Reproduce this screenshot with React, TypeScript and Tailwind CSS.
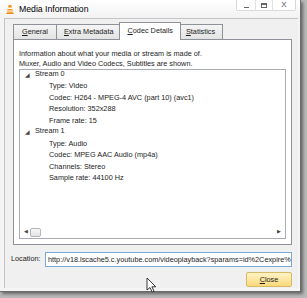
import React from "react";

const tree = [
  {
    name: "Stream 0",
    items: [
      "Type: Video",
      "Codec: H264 - MPEG-4 AVC (part 10) (avc1)",
      "Resolution: 352x288",
      "Frame rate: 15",
    ],
  },
  {
    name: "Stream 1",
    items: [
      "Type: Audio",
      "Codec: MPEG AAC Audio (mp4a)",
      "Channels: Stereo",
      "Sample rate: 44100 Hz",
    ],
  },
];

const tabs = [
  { first: "G", rest: "eneral" },
  { first: "E", rest: "xtra Metadata" },
  { first: "C", rest: "odec Details", active: true },
  { first: "S", rest: "tatistics" },
];

function VlcIcon() {
  return (
    <svg width="10" height="11" viewBox="0 0 10 11">
      <path d="M1 10 L9 10 L8 8.5 L2 8.5 Z" fill="#f08a12" />
      <path d="M3.6 1 L6.4 1 L8 8.5 L2 8.5 Z" fill="#f7941d" />
      <path d="M3.1 3.5 L6.9 3.5 L7.2 5 L2.8 5 Z" fill="#ffffff" />
      <path d="M2.5 6.4 L7.5 6.4 L7.7 7.4 L2.3 7.4 Z" fill="#ffffff" />
    </svg>
  );
}

function Cursor() {
  return (
    <svg width="12" height="16" viewBox="0 0 12 16" className="absolute left-[146px] top-[277px]">
      <path
        d="M1 1 L1 13 L4 10.5 L6.2 15 L8 14.2 L5.9 9.8 L9.8 9.8 Z"
        fill="#ffffff"
        stroke="#222"
        strokeWidth="0.9"
        strokeLinejoin="round"
      />
    </svg>
  );
}

export default function App() {
  return (
    <div className="relative w-[307px] h-[298px] overflow-hidden bg-[#b9b9b9] font-['Liberation_Sans',Arial,sans-serif] text-[#1c1c1c]">
      {/* window */}
      <div className="flex flex-col w-[301px] h-[292px] bg-[#f4f4f4] border-r border-b border-[#6b6b6b] shadow-[2px_2px_3px_rgba(0,0,0,0.45)]">
        {/* title bar */}
        <div className="flex items-center h-[18px] pl-[5px] pr-[4px] bg-gradient-to-b from-[#ffffff] to-[#f2f2f2]">
          <VlcIcon />
          <span className="ml-[4px] text-[8.7px] leading-none text-black">Media Information</span>
          <div className="ml-auto flex items-start self-start h-[11px] border border-t-0 border-[#d8d8d8] rounded-b-[2px] bg-white text-[#555]">
            <div className="flex items-end justify-center w-[19px] h-[10px] pb-[2px] border-r border-[#e2e2e2]">
              <div className="w-[5px] h-[1.5px] bg-[#666]" />
            </div>
            <div className="flex items-center justify-center w-[17px] h-[10px] border-r border-[#e2e2e2]">
              <div className="w-[6px] h-[5px] border border-[#666] border-t-2" />
            </div>
            <div className="flex items-center justify-center w-[22px] h-[10px] text-[8px] leading-none text-[#555]">X</div>
          </div>
        </div>

        {/* client area */}
        <div className="flex flex-col flex-1 ml-[4px] mr-[2px] mb-[3px] border-l border-t border-[#c4c4c4] bg-[#f0f0f0] pl-[8px] pr-[6px] text-[7.3px]">
          {/* tabs */}
          <div className="flex items-end h-[20px]">
            {tabs.map((t) =>
              t.active ? (
                <div
                  key={t.rest}
                  className="relative z-10 -mb-px mx-[-2px] h-[18px] px-[7px] pt-[4px] bg-white border border-b-0 border-[#8e9198] leading-none"
                >
                  <span className="underline">{t.first}</span>
                  {t.rest}
                </div>
              ) : (
                <div
                  key={t.rest}
                  className="h-[15px] px-[7px] first:px-[8px] pt-[3px] bg-gradient-to-b from-[#f5f5f5] to-[#e3e3e3] border border-b-0 border-[#8e9198] leading-none -ml-px first:ml-0"
                >
                  <span className="underline">{t.first}</span>
                  {t.rest}
                </div>
              )
            )}
          </div>
          {/* pane */}
          <div className="flex flex-col h-[206px] bg-white border border-[#8e9198] px-[5px] pt-[9px] pb-[5px]">
            <div className="leading-[10px]">
              Information about what your media or stream is made of.
              <br />
              Muxer, Audio and Video Codecs, Subtitles are shown.
            </div>
            <div className="relative flex flex-col flex-1 mt-[0px] border border-[#a9acb2]">
              <div className="flex-1 -mt-[1px] pl-[5px]">
                {tree.map((s) => (
                  <div key={s.name}>
                    <div className="flex items-center h-[11.45px]">
                      <span className="w-[10px] text-[5.5px] text-[#444]">◢</span>
                      <span>{s.name}</span>
                    </div>
                    {s.items.map((it) => (
                      <div key={it} className="h-[11.45px] leading-[11.45px] pl-[24px] whitespace-nowrap">
                        {it}
                      </div>
                    ))}
                  </div>
                ))}
              </div>
              {/* horizontal scrollbar */}
              <div className="flex items-center h-[10px] mb-[1px] px-[4px]">
                <span className="text-[5px] text-[#444]">◀</span>
                <div className="ml-[2px] w-[11px] h-[9px] rounded-[2px] border border-[#b5b5b5] bg-gradient-to-b from-[#f8f8f8] to-[#e2e2e2]" />
                <span className="ml-auto text-[5px] text-[#444]">▶</span>
              </div>
            </div>
          </div>

          {/* location */}
          <div className="flex items-center mt-[7px]">
            <span className="-ml-[2px] w-[34px]">Location:</span>
            <div className="flex-1 h-[15px] border border-[#7aa9d9] bg-white pl-[2px] leading-[13px] overflow-hidden whitespace-nowrap">
              http://v18.lscache5.c.youtube.com/videoplayback?sparams=id%2Cexpire%
            </div>
          </div>

          {/* close */}
          <div className="flex justify-end mt-[5px]">
            <div className="flex items-center justify-center w-[46px] h-[15px] rounded-[2px] border border-[#d8b968] bg-gradient-to-b from-[#fff3c4] to-[#fbd97a] leading-none">
              <span className="underline">C</span>lose
            </div>
          </div>
        </div>
      </div>
      <Cursor />
    </div>
  );
}
